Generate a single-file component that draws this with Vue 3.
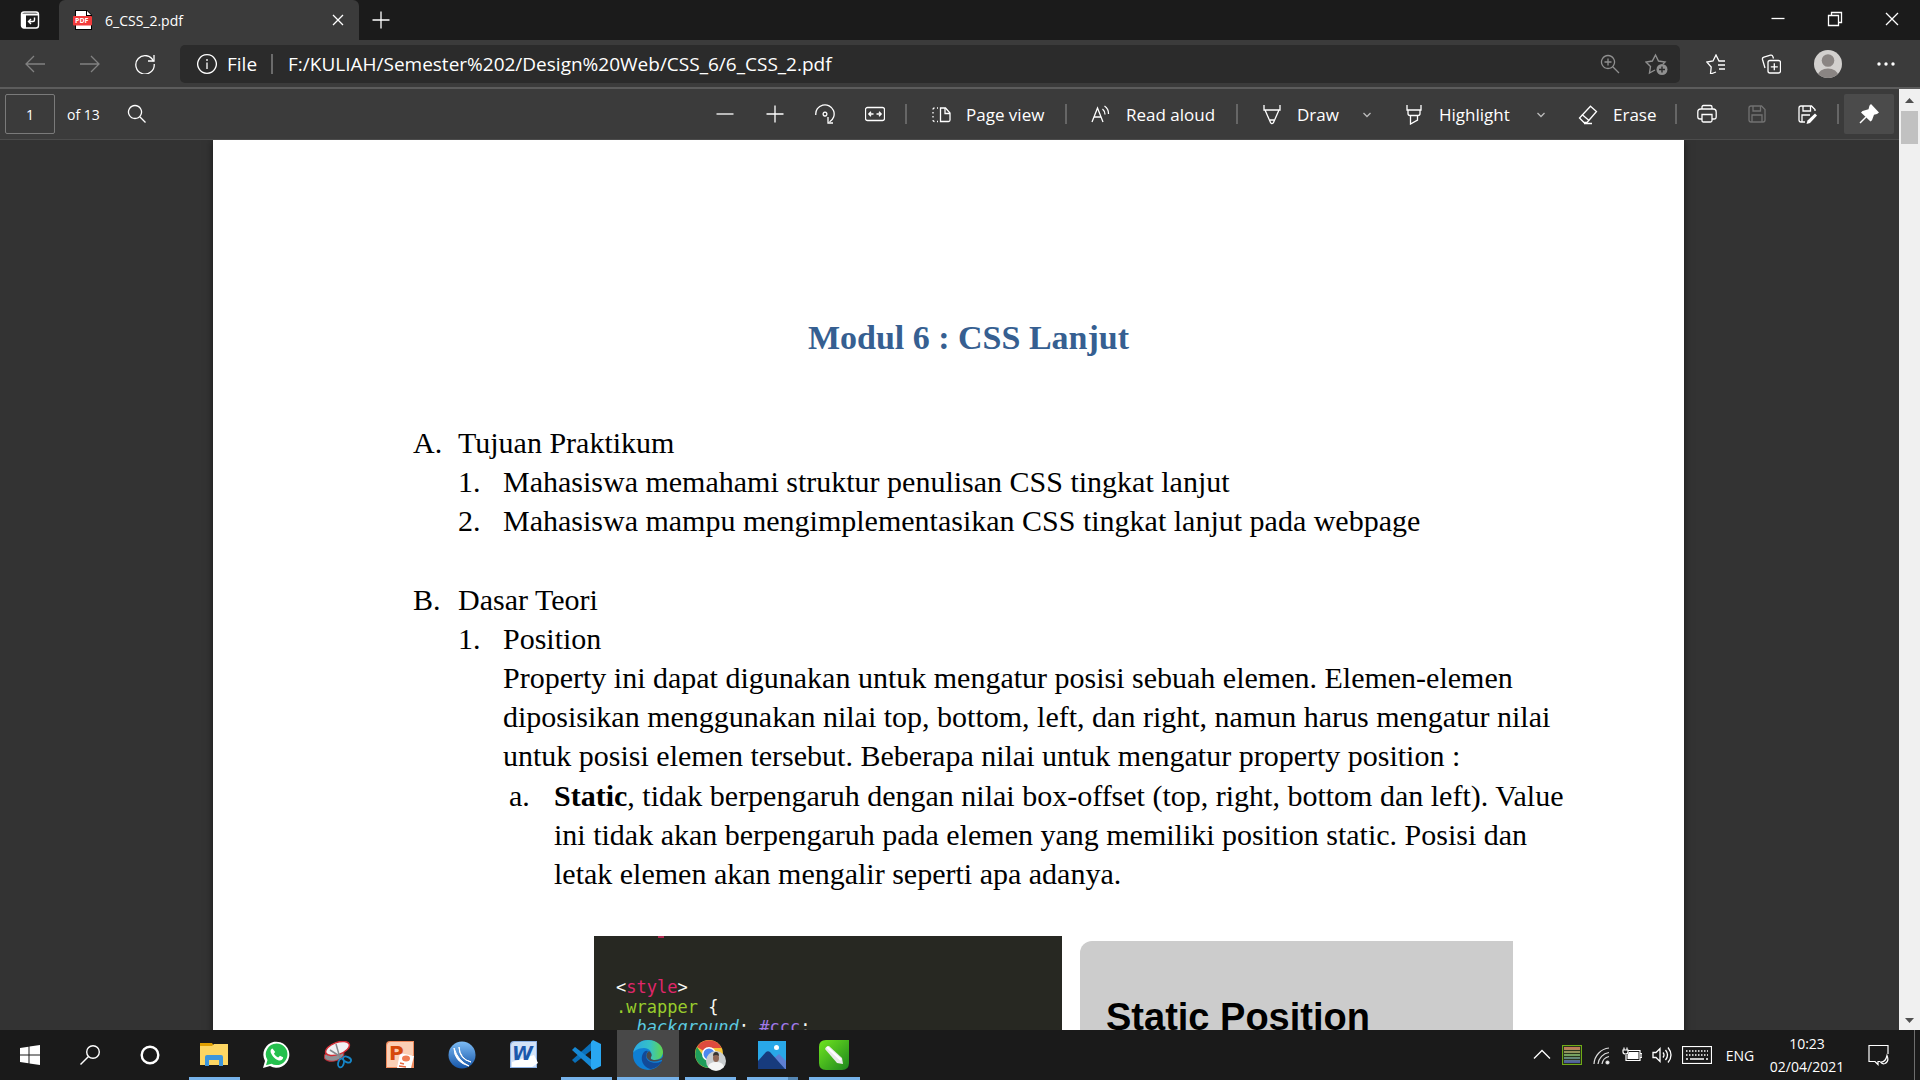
<script setup>
import { ref, h } from 'vue'

const page = ref('1')
const address = ref('F:/KULIAH/Semester%202/Design%20Web/CSS_6/6_CSS_2.pdf')

const shapes = {
  back: ['M20 10H1M9 2L1 10l8 8'],
  forward: ['M0 10h19M11 2l8 8-8 8'],
  refresh: ['M18.5 7.2A9.2 9.2 0 1 0 19.2 10', 'M19 1v6h-6'],
  info: ['M10 .7a9.3 9.3 0 1 0 .01 0z', 'M10 8.5V15M10 5v2'],
  zoomIn: ['M8 1.5a6.5 6.5 0 1 0 .01 0zM13 13l6 6M4.5 8h7M8 4.5v7'],
  favorites: ['M10 18l-5.5 2 .7-7L.8 8l6.2-1L10 1l3 6h6M12 11h7M13 15h6'],
  collections: ['M4 14L1.5 5.5a2 2 0 0 1 1.4-2.4L9.5 1.2a2 2 0 0 1 2.4 1.4L12.5 4.5', 'M9 6.500h8.500a2 2 0 0 1 2 2V17a2 2 0 0 1-2 2H9a2 2 0 0 1-2-2V8.500a2 2 0 0 1 2-2zM13.300 9.300v7M9.800 12.800h7'],
  search: ['M8 1.500a6.500 6.500 0 1 0 .01 0zM12.800 12.800l5.700 5.700'],
  minus: ['M1.500 10h17'],
  plus: ['M1.500 10h17M10 1.500v17'],
  rotate: ['M.8 11A9.200 9.200 0 1 1 14.500 18', 'M13 13v6h5', 'M10 8.200a1.900 1.900 0 1 0 .01 0z'],
  fit: ['M2.500 3.500h15a2 2 0 0 1 2 2v9a2 2 0 0 1-2 2h-15a2 2 0 0 1-2-2v-9a2 2 0 0 1 2-2zM8.500 10H4M6 7.800L3.800 10 6 12.200M11.500 10H16M14 7.800l2.200 2.200-2.200 2.200'],
  pageView: ['M9.500 3h5l4.500 5v7a1.500 1.500 0 0 1-1.500 1.500h-8z', 'M14 3v5.500h5', 'M7 3H6M3.500 3Q2 3 2 4.500M2 7v1.500M2 11v1.500M2 15q0 1.500 1.500 1.500M6 16.500h1'],
  read: ['M1 17L6.500 3 12 17M3 12h7', 'M11.500 4a7 7 0 0 1 2.500 5.500M13.500 1a9 9 0 0 1 4 8'],
  draw: ['M2 0v5h16V0M3 5l5.500 12.500a1.600 1.600 0 0 0 3 0L17 5M8 15h4'],
  highlight: ['M3 0v5h14V0M4 5v3.500q0 2 2 2h8q2 0 2-2V5M6.500 10.500V19l7-4v-4.500'],
  erase: ['M12.500 1.200l6 5.300-9.500 11H6L1.500 13z', 'M4 9.500l7 6M6 18.500h8'],
  print: ['M5 5V3q0-1.500 1.500-1.500h7Q15 1.500 15 3v2M5 15H3Q.8 15 .8 12.800V8Q.8 5 3.800 5h12.400q3 0 3 3v4.800Q19.200 15 17 15h-2', 'M5 10.500h10v6q0 1.500-1.500 1.500h-7Q5 18 5 16.500z'],
  save: ['M4 2h10.500L18 5.500V16q0 2-2 2H4q-2 0-2-2V4q0-2 2-2z', 'M6 2v5h7.500V2M5 18v-7h10v7'],
  saveAs: ['M8 18H4q-2 0-2-2V4q0-2 2-2h10.500L18 5.500V7M6 2v5h7.500V2M5 18v-7h8'],
  chevron: ['M6.500 9l3.500 3.500L13.500 9'],
  close: ['M5 5l10 10M15 5L5 15'],
  winMin: ['M3.500 9.500h13'],
  winMax: ['M3.500 6.500h10v10h-10zM6.500 6.500v-3h10v10h-3'],
  winClose: ['M4 4l12 12M16 4L4 16'],
  up: ['M2 13.500l8-8 8 8'],
  wifi: ['M2 19A17 17 0 0 1 17 3M6 19A13 13 0 0 1 17 7.500M10 19a9 9 0 0 1 7-7.500'],
  speaker: ['M1 7.500h3l4-4v13l-4-4H1zM11 7.500q2 2.500 0 5M13.500 5q4 5 0 10M16 2.500q6 7.500 0 15'],
}

const Ico = (p) =>
  h('svg', { width: 20, height: 20, viewBox: '0 0 20 20', fill: 'none', stroke: 'currentColor', 'stroke-width': 1.3, 'aria-hidden': 'true' },
    shapes[p.name].map((d) => h('path', { d })))
Ico.props = ['name']

const zoomTools = [
  ['minus', 'Zoom out'],
  ['plus', 'Zoom in'],
  ['rotate', 'Rotate'],
  ['fit', 'Fit to width'],
]
</script>

<template>
  <div class="screen">
    <header class="tabs">
      <button class="tab-actions" aria-label="Tab actions">
        <svg width="20" height="20" viewBox="0 0 20 20" fill="none" stroke="#fff" stroke-width="1.4">
          <rect x="1.500" y="2" width="17" height="16" rx="2.500" /><path d="M1.500 4.500h17" stroke-width="2" /><path d="M2 5h4v13H2z" fill="#fff" stroke="none" /><path d="M14.500 7.500v2.500q0 1.500-1.500 1.500H9M11 9l-2.500 2.500L11 14" />
        </svg>
      </button>
      <div class="tab">
        <svg width="20" height="20" viewBox="0 0 20 20">
          <path d="M2 0h12l5 5v15H2z" fill="#000" /><path d="M3 1h10v5h5v13H3z" fill="#fff" /><path d="M14 1l4 4h-4z" fill="#fff" /><rect y="6" width="19" height="9.500" rx="1" fill="#f23b3b" />
          <text x="2" y="13" font-size="7" font-weight="bold" fill="#fff" font-family="Open Sans, sans-serif">PDF</text>
        </svg>
        <span class="tab-title">6_CSS_2.pdf</span>
        <button class="tab-close" aria-label="Close tab"><Ico name="close" /></button>
      </div>
      <button class="new-tab" aria-label="New tab"><Ico name="plus" /></button>
      <div class="window-controls">
        <button aria-label="Minimize"><Ico name="winMin" /></button>
        <button aria-label="Restore"><Ico name="winMax" /></button>
        <button aria-label="Close"><Ico name="winClose" /></button>
      </div>
    </header>

    <nav class="navbar">
      <button class="nav dim" aria-label="Back"><Ico name="back" /></button>
      <button class="nav dim" aria-label="Forward"><Ico name="forward" /></button>
      <button class="nav" aria-label="Refresh"><Ico name="refresh" /></button>
      <div class="address">
        <Ico name="info" />
        <label for="url">File</label>
        <i class="bar"></i>
        <input id="url" v-model="address" type="text" spellcheck="false" />
        <button class="in-bar" aria-label="Zoom"><Ico name="zoomIn" /></button>
        <button class="in-bar" aria-label="Add to favorites">
          <svg width="24" height="22" viewBox="0 0 24 22" fill="none" stroke="currentColor" stroke-width="1.400">
            <path d="M10 17l-5.500 3 1-6.500L1 9l6.300-1L10.500 2l3 6 6.500 1-2 2" /><circle cx="17" cy="16.500" r="5.500" fill="currentColor" stroke="none" /><path d="M17 13.500v6M14 16.500h6" stroke="#2b2b2b" />
          </svg>
        </button>
      </div>
      <div class="nav-right">
        <button class="nav" aria-label="Favorites"><Ico name="favorites" /></button>
        <button class="nav" aria-label="Collections"><Ico name="collections" /></button>
        <button class="nav wide" aria-label="Profile">
          <svg width="28" height="28" viewBox="0 0 28 28"><defs><clipPath id="face"><circle cx="14" cy="14" r="14" /></clipPath></defs><g clip-path="url(#face)"><path d="M0 0h28v28H0z" fill="#d2d0ce" /><circle cx="14" cy="10.500" r="6.300" fill="#8a8583" /><ellipse cx="14" cy="25.500" rx="10" ry="7" fill="#8a8583" /></g></svg>
        </button>
        <button class="nav" aria-label="Settings and more">
          <svg width="18" height="4" viewBox="0 0 18 4" fill="#fff"><circle cx="2" cy="2" r="1.700" /><circle cx="9" cy="2" r="1.700" /><circle cx="16" cy="2" r="1.700" /></svg>
        </button>
      </div>
    </nav>

    <main class="viewer">
      <div class="viewer-body">
        <div class="toolbar">
          <input v-model="page" class="page-number" type="text" aria-label="Page number" />
          <span class="page-count">of 13</span>
          <button class="tool find" aria-label="Find"><Ico name="search" /></button>
          <div class="tools">
            <button v-for="[name, label] in zoomTools" :key="name" class="tool" :aria-label="label"><Ico :name="name" /></button>
            <i class="sep gap"></i>
            <button class="text-tool page-view"><Ico name="pageView" />Page view</button>
            <i class="sep gap"></i>
            <button class="text-tool read-aloud"><Ico name="read" />Read aloud</button>
            <i class="sep gap"></i>
            <button class="text-tool draw"><Ico name="draw" />Draw</button>
            <button class="more" aria-label="Draw options"><Ico name="chevron" /></button>
            <button class="text-tool highlight"><Ico name="highlight" />Highlight</button>
            <button class="more" aria-label="Highlight options"><Ico name="chevron" /></button>
            <button class="text-tool erase"><Ico name="erase" />Erase</button>
            <i class="sep"></i>
            <button class="tool" aria-label="Print"><Ico name="print" /></button>
            <button class="tool faded" aria-label="Save"><Ico name="save" /></button>
            <button class="tool" aria-label="Save as">
              <svg width="20" height="20" viewBox="0 0 20 20" fill="none" stroke="#fff" stroke-width="1.300"><path v-for="d in shapes.saveAs" :key="d" :d="d" /><path d="M18 9.500l2 2-7 7.500-3.500 1 1-3.500z" fill="#fff" stroke="none" /></svg>
            </button>
            <i class="sep"></i>
            <button class="tool pinned" aria-label="Unpin toolbar">
              <svg width="20" height="20" viewBox="0 0 20 20" fill="#fff"><path d="M12 0l8 8.500-2 1.500-3 .8-2 5.400-1.500 1.200L2 8.500 3.500 7l6-1.800L10.500 1.500z" /><path d="M7 13l-6 6" stroke="#fff" stroke-width="1.500" /></svg>
            </button>
          </div>
        </div>

        <div class="canvas">
          <article class="sheet">
            <h1>Modul 6 : CSS Lanjut</h1>
            <ol class="outline">
              <li>
                <span>A.</span>
                <div>
                  Tujuan Praktikum
                  <ol>
                    <li><span>1.</span><div>Mahasiswa memahami struktur penulisan CSS tingkat lanjut</div></li>
                    <li><span>2.</span><div>Mahasiswa mampu mengimplementasikan CSS tingkat lanjut pada webpage</div></li>
                  </ol>
                </div>
              </li>
              <li>
                <span>B.</span>
                <div>
                  Dasar Teori
                  <ol>
                    <li>
                      <span>1.</span>
                      <div>
                        Position
                        <p>Property ini dapat digunakan untuk mengatur posisi sebuah elemen. Elemen-elemen diposisikan menggunakan nilai top, bottom, left, dan right, namun harus mengatur nilai untuk posisi elemen tersebut. Beberapa nilai untuk mengatur property position :</p>
                        <ol class="values">
                          <li>
                            <span>a.</span>
                            <div><b>Static</b>, tidak berpengaruh dengan nilai box-offset (top, right, bottom dan left). Value ini tidak akan berpengaruh pada elemen yang memiliki position static. Posisi dan letak elemen akan mengalir seperti apa adanya.</div>
                          </li>
                        </ol>
                      </div>
                    </li>
                  </ol>
                </div>
              </li>
            </ol>
            <div class="figures">
              <pre class="code"><span class="w">&lt;</span><span class="tag">style</span><span class="w">&gt;</span>
<span class="sel">.wrapper</span> <span class="w">{</span>
  <span class="prop">background</span><span class="w">:</span> <span class="val">#ccc</span><span class="w">;</span></pre>
              <div class="result">Static Position</div>
            </div>
          </article>
        </div>
      </div>
      <div class="scrollbar">
        <svg width="21" height="22" viewBox="0 0 21 22"><path d="M6 14l4.500-5 4.500 5z" fill="#505050" /></svg>
        <div class="thumb"></div>
        <svg class="down" width="21" height="20" viewBox="0 0 21 20"><path d="M6 8l4.500 5L15 8z" fill="#505050" /></svg>
      </div>
    </main>

    <footer class="taskbar">
      <button class="system" aria-label="Start"><svg width="20" height="20" viewBox="0 0 20 20" fill="#fff"><path d="M0 3l8.500-1.300v7.800H0zM9.500 1.500L20 0v9.500H9.500zM0 10.500h8.500v7.800L0 17zM9.500 10.500H20V20L9.500 18.500z" /></svg></button>
      <button class="system" aria-label="Search"><svg width="20" height="20" viewBox="0 0 20 20" fill="none" stroke="#fff" stroke-width="1.400"><circle cx="13" cy="7" r="6.300" /><path d="M8.500 11.500L.5 19.500" /></svg></button>
      <button class="system" aria-label="Cortana"><svg width="20" height="20" viewBox="0 0 20 20" fill="none" stroke="#fff" stroke-width="2.400"><circle cx="10" cy="10" r="8.300" /></svg></button>
      <div class="apps">
        <button class="app running" aria-label="File Explorer"><svg width="28" height="28" viewBox="0 0 28 28"><path d="M0 2h12l2 3H0z" fill="#e09f00" /><path d="M0 5h12l2-2h14v21H0z" fill="#fdd663" /><path d="M5 25V16q0-2 2-2h14q2 0 2 2v9h-4v-6H9v6z" fill="#3d96dd" /></svg></button>
        <button class="app" aria-label="WhatsApp"><svg width="28" height="28" viewBox="0 0 28 28"><path d="M1 27l2-7A13 13 0 1 1 8 25z" fill="#fff" /><path d="M14.500 2.500a10.800 10.800 0 1 1-5 20.300L4 24.300l1.500-5.200a10.800 10.800 0 0 1 9-16.600z" fill="#25c04e" /><path d="M10.500 7.500c-2 .5-2.500 3-1 5.500 2 4 5.500 6.500 8.500 6.500 2.500 0 3.500-2.500 3-3.200l-3-1.600-1.800 1.800c-2-.8-3.500-2.200-4.200-4l1.200-1.500z" fill="#fff" /></svg></button>
        <button class="app" aria-label="Snipping Tool"><svg width="28" height="28" viewBox="0 0 28 28" fill="none"><ellipse cx="10" cy="14.500" rx="10" ry="5.500" fill="#8e9095" stroke="#c22b35" transform="rotate(-12 10 14.500)" /><ellipse cx="13.500" cy="7.500" rx="12.500" ry="6" fill="#f1f1f3" stroke="#d32d35" stroke-width="1.500" transform="rotate(-20 13.500 7.500)" /><path d="M12 3l4 14M6 9l11 7" stroke="#86898e" stroke-width="1.500" /><ellipse cx="17" cy="22" rx="2.800" ry="4.500" stroke="#1686c8" stroke-width="1.800" transform="rotate(15 17 22)" /><ellipse cx="23" cy="18.500" rx="4.200" ry="2.600" stroke="#1686c8" stroke-width="1.800" transform="rotate(25 23 18.500)" /></svg></button>
        <button class="app" aria-label="PowerPoint"><svg width="28" height="28" viewBox="0 0 28 28"><path d="M0 4q0-4 4-4h24v27H0z" fill="#f08a5c" /><path d="M1 26V5q0-4 4-4h22v13L12 26z" fill="#fbd0b6" /><path d="M14 12l14 3-3 12H11z" fill="#fff" /><ellipse cx="20" cy="17.500" rx="4" ry="3" fill="#f07b52" /><path d="M14 22l4 1M13 25l7 1" stroke="#e9673e" stroke-width="1.500" /><text x="3" y="19" font-size="20" font-weight="bold" fill="#d6490c" font-family="DejaVu Sans, sans-serif">P</text></svg></button>
        <button class="app" aria-label="Internet Download Manager"><svg width="28" height="28" viewBox="0 0 28 28"><defs><linearGradient id="globe" x1="0" y1="0" x2="0" y2="1"><stop stop-color="#7dbcf5" /><stop offset="1" stop-color="#1555a8" /></linearGradient></defs><circle cx="14" cy="14" r="13.500" fill="url(#globe)" /><path d="M11 6q0 12 12 15Q12 18 11 6zM6 7q0 14 15 18Q10 20 6 7z" fill="#fff" stroke="#fff" stroke-width="1" /></svg></button>
        <button class="app" aria-label="Word"><svg width="28" height="28" viewBox="0 0 28 28"><path d="M0 4q0-4 4-4h23v27H0z" fill="#8fb3e6" /><path d="M1 26V5q0-4 4-4h21v25z" fill="#d3e2f7" /><path d="M2 21l22-7 4 8-6 4H2z" fill="#fff" /><text x="2" y="19" font-size="19" font-weight="bold" font-style="italic" fill="#1c58ac" font-family="DejaVu Sans, sans-serif">W</text></svg></button>
        <button class="app running" aria-label="Visual Studio Code"><svg width="30" height="30" viewBox="0 0 30 30"><path d="M22 1L1 20l3 3 18-14z" fill="#0a6fb8" /><path d="M22 29L1 10l3-3 18 14z" fill="#1688d4" /><path d="M22 0l8 4v22l-8 4-2-2V2z" fill="#29a7f2" /></svg></button>
        <button class="app running active" aria-label="Microsoft Edge"><svg width="30" height="30" viewBox="0 0 30 30"><defs><linearGradient id="sky"><stop stop-color="#2ba7e4" /><stop offset=".55" stop-color="#35c1c7" /><stop offset="1" stop-color="#62d64c" /></linearGradient></defs><circle cx="15" cy="15" r="15" fill="#0f7fd4" /><path d="M0 13C2 4 8 0 15 0c9 0 15 6 15 12 0 5-4 8-8 8-3 0-5-1-4-3 2-5-2-9-7-9C5 8 1 11 0 13z" fill="url(#sky)" /><path d="M11 12c-5 6-1 16 7 17 5-1 9-4 11-8-7 4-16 1-16-5q0-3 2-5-2-1-4 1z" fill="#124a98" /><path d="M16 11q-4 3-2 7 4 6 14 2 2-1 2 2l-2 2 3-3V14q-1 6-9 6c-3 0-5-1-4-3q2-3-2-6z" fill="#4a4a4a" /></svg></button>
        <button class="app running" aria-label="Google Chrome"><svg width="32" height="32" viewBox="0 0 32 32"><circle cx="15" cy="15" r="14" fill="#f9c83a" /><path d="M15 15L3 8a14 14 0 0 1 24.500 1H15z" fill="#de4b3e" /><path d="M15 15v14A14 14 0 0 1 3 8l7 10z" fill="#1f9d5b" /><circle cx="15" cy="15" r="7" fill="#fff" /><circle cx="15" cy="15" r="5.500" fill="#4d88ee" /><circle cx="22" cy="22" r="10" fill="#c9cdcf" /><ellipse cx="22" cy="19" rx="3" ry="4" fill="#8e6756" /><path d="M19 17q0-4 3-4t3 4q-3-2-6 0z" fill="#363331" /><path d="M14 28q1-5 8-5t8 5q-8 7-16 0z" fill="#f4f5f5" /></svg></button>
        <button class="app running stacked" aria-label="Photos"><svg width="28" height="28" viewBox="0 0 28 28"><path d="M0 0h28v28H0z" fill="#29a8e8" /><path d="M15 18l6-5 7 7v8H18z" fill="#5d7fd3" /><path d="M0 20l8-9q2-1.500 4 0l15 17H0z" fill="#173b7d" /><circle cx="18.500" cy="6.500" r="2.500" fill="#fff" /></svg></button>
        <button class="app running" aria-label="CorelDRAW"><svg width="30" height="30" viewBox="0 0 30 30"><defs><linearGradient id="leaf" x1="0" y1="0" x2="1" y2="1"><stop stop-color="#6fe51f" /><stop offset="1" stop-color="#1d861d" /></linearGradient></defs><path d="M7 0h23v23q0 7-7 7H7q-7 0-7-7V7q0-7 7-7z" fill="url(#leaf)" /><path d="M6 9q1-3 4-3l13 12 1 6-6-1z" fill="#e9e9e9" /><path d="M8 7l14 13" stroke="#fff" stroke-width="2" /></svg></button>
      </div>
      <div class="tray">
        <button class="tray-item" aria-label="Show hidden icons"><Ico name="up" /></button>
        <button class="tray-item" aria-label="Monitor"><svg width="20" height="20" viewBox="0 0 20 20"><defs><linearGradient id="meter" gradientUnits="userSpaceOnUse" x1="0" y1="2" x2="0" y2="18"><stop stop-color="#c77558" /><stop offset=".5" stop-color="#74a55e" /><stop offset="1" stop-color="#4c57a5" /></linearGradient></defs><rect x=".5" y=".5" width="19" height="19" fill="#29351c" stroke="#70ab16" /><path d="M2 2h16v3H2zM2 6h16v2H2zM2 9h16v2H2zM2 12h16v2H2zM2 15h16v3H2z" fill="url(#meter)" /></svg></button>
        <button class="tray-item" aria-label="Network"><svg width="20" height="20" viewBox="0 0 20 20" fill="none" stroke="#ddd" stroke-width="1.200"><path v-for="d in shapes.wifi" :key="d" :d="d" /><circle cx="15.500" cy="17.500" r="1.500" fill="#fff" /></svg></button>
        <button class="tray-item" aria-label="Battery"><svg width="20" height="20" viewBox="0 0 20 20" fill="none" stroke="#fff" stroke-width="1.200"><path d="M6 5.500h12v10H4V10M18.500 8.500H20v4h-1.500M1 5h5v2q0 2-2.500 2T1 7zM2 2.500V5M5 2.500V5" /><path d="M7 7h9.500v7h-11v-4z" fill="#fff" stroke="none" /></svg></button>
        <button class="tray-item" aria-label="Volume"><Ico name="speaker" /></button>
        <button class="tray-item keyboard" aria-label="Touch keyboard"><svg width="30" height="18" viewBox="0 0 30 18" fill="none" stroke="#fff"><rect x=".5" y=".5" width="29" height="17" stroke-width="1.200" /><path d="M4 5h22M4 9h22" stroke-width="1.500" stroke-dasharray="1.500 1.500" /><path d="M4 13h2M8 13h14M24 13h2" stroke-width="1.400" /></svg></button>
        <button class="language">ENG</button>
        <button class="clock"><span>10:23</span><span>02/04/2021</span></button>
        <button class="notices" aria-label="Notifications"><svg width="22" height="22" viewBox="0 0 22 22" fill="none" stroke="#fff" stroke-width="1.200"><path d="M20 10V1.500H1v16h6l3 3v-3h2" /><path d="M19 11.500q2.500 6-2 8-3 1-4.500-1.500 5 .5 6.500-6.500z" /></svg></button>
        <i class="desktop-edge"></i>
      </div>
    </footer>
  </div>
</template>

<style>
body { background: #333; }
</style>

<style scoped>
.screen {
  height: 100vh;
  display: flex;
  flex-direction: column;
  overflow: hidden;
  color: #fff;
  font-family: "Open Sans", "Noto Sans", sans-serif;
  font-size: 17px;
}
button, input {
  font: inherit;
  color: inherit;
  background: none;
  border: 0;
  padding: 0;
}
button {
  display: flex;
  align-items: center;
  justify-content: center;
  flex: none;
  white-space: nowrap;
}
svg { flex: none; display: block; }

.tabs { display: flex; height: 40px; flex: none; background: #1b1b1b; }
.tab-actions { width: 59px; }
.tab {
  display: flex;
  align-items: center;
  width: 300px;
  box-sizing: border-box;
  padding: 0 11px 0 14px;
  background: #3b3b3b;
  border-radius: 6px 6px 0 0;
}
.tab-title { flex: 1; padding-left: 12px; font-size: 14px; }
.new-tab { width: 43px; }
.window-controls { display: flex; margin-left: auto; }
.window-controls button { width: 57px; padding-bottom: 3px; }

.navbar {
  display: flex;
  align-items: center;
  height: 47px;
  flex: none;
  padding: 0 7px;
  background: #3b3b3b;
  border-bottom: 2px solid #5c5c5c;
}
.nav { width: 55px; height: 40px; }
.nav.wide { width: 60px; }
.dim { color: #818181; }
.address {
  display: flex;
  align-items: center;
  flex: 1;
  height: 38px;
  margin: 0 8px;
  padding: 0 0 0 17px;
  background: #2b2b2b;
  border-radius: 5px;
  font-size: 19px;
}
.address label { flex: none; width: 54px; padding-left: 10px; box-sizing: border-box; }
.bar { width: 2px; height: 20px; background: #6b6b6b; }
.address input { flex: 1; min-width: 0; margin-left: 15px; }
.in-bar { width: 47px; color: #909090; }
.nav-right { display: flex; align-items: center; }

.viewer { display: flex; flex: 1; min-height: 0; }
.viewer-body { display: flex; flex-direction: column; flex: 1; min-width: 0; }
.toolbar {
  display: flex;
  align-items: center;
  height: 50px;
  flex: none;
  padding: 0 5px;
  background: #3b3b3b;
  border-bottom: 1px solid #4c4c4c;
}
.page-number {
  width: 50px;
  height: 40px;
  box-sizing: border-box;
  text-align: center;
  font-size: 14px;
  border: 1px solid #7a7a7a;
  border-radius: 2px;
}
.page-count { width: 45px; padding-left: 12px; font-size: 14px; }
.tools { display: flex; align-items: center; margin-left: auto; }
.tool { width: 50px; height: 40px; }
.text-tool { justify-content: flex-start; gap: 15px; padding: 1px 0 0 10px; height: 40px; box-sizing: border-box; }
.page-view { width: 139px; }
.read-aloud { width: 150px; }
.draw { width: 100px; }
.highlight { width: 132px; }
.erase { width: 102px; }
.more { width: 30px; margin-right: 12px; color: #bbb; }
.sep { width: 2px; height: 20px; margin: 0 5px; background: #666; }
.sep.gap { margin-right: 14px; }
.faded { color: #727272; }
.pinned { background: #4b4b4b; border-radius: 2px; }

.canvas { flex: 1; min-height: 0; overflow: hidden; padding: 0 215px 0 213px; background: #333; }
.sheet {
  min-height: 100%;
  box-sizing: border-box;
  padding: 174px 104px 0 200px;
  background: #fff;
  color: #000;
  box-shadow: 0 0 8px #0008;
  font: 30px/39px "Liberation Serif", serif;
}
h1 { margin: 0 0 61px; padding-right: 56px; text-align: center; color: #365f91; font-size: 34px; line-height: 48px; }
ol { list-style: none; margin: 0; padding: 0; }
li { display: grid; grid-template-columns: 45px 1fr; }
p { margin: 0; }
.outline { display: grid; gap: 40px; }
.values { margin: 1px 0 0 6px; }
.figures {
  display: grid;
  grid-template-columns: 468fr 433fr;
  gap: 18px;
  margin: 43px 67px 0 181px;
}
.code {
  position: relative;
  height: 400px;
  box-sizing: border-box;
  margin: 0;
  padding: 41px 22px 0;
  background: #272822;
  font: 17px/20px "DejaVu Sans Mono", monospace;
}
.code::before { content: ""; position: absolute; top: 0; left: 64px; width: 6px; height: 2px; background: #b02a50; }
.w { color: #f8f8f2; }
.tag { color: #e0266b; }
.sel { color: #98cc2c; }
.prop { color: #5ccbe0; font-style: italic; }
.val { color: #a078e8; }
.result {
  height: 400px;
  box-sizing: border-box;
  margin-top: 5px;
  padding: 54px 26px 0;
  background: #ccc;
  border-radius: 12px 0 0 0;
  font: bold 38px/44px "Liberation Sans", sans-serif;
}

.scrollbar { display: flex; flex-direction: column; align-items: center; width: 21px; flex: none; background: #f0f0f0; }
.thumb { width: 17px; height: 33px; background: #c1c1c1; }
.down { margin-top: auto; }

.taskbar { display: flex; height: 50px; flex: none; background: #1a1a1a; }
.system { width: 60px; }
.apps { display: flex; margin-left: 3px; }
.app { position: relative; width: 62px; }
.running::after { content: ""; position: absolute; bottom: 0; left: 6px; right: 5px; height: 3px; background: #76b2ea; }
.active { background: #484848; }
.active::after { left: 0; right: 0; }
.stacked::after { border-right: 10px solid #5586b3; box-sizing: border-box; }
.tray { display: flex; margin-left: auto; font-size: 14px; }
.tray-item { width: 30px; }
.tray-item.keyboard { width: 40px; }
.language { width: 46px; }
.clock { width: 88px; flex-direction: column; line-height: 23px; }
.notices { width: 56px; }
.desktop-edge { width: 5px; margin-left: 7px; border-left: 1px solid #6e6e6e; }
</style>
